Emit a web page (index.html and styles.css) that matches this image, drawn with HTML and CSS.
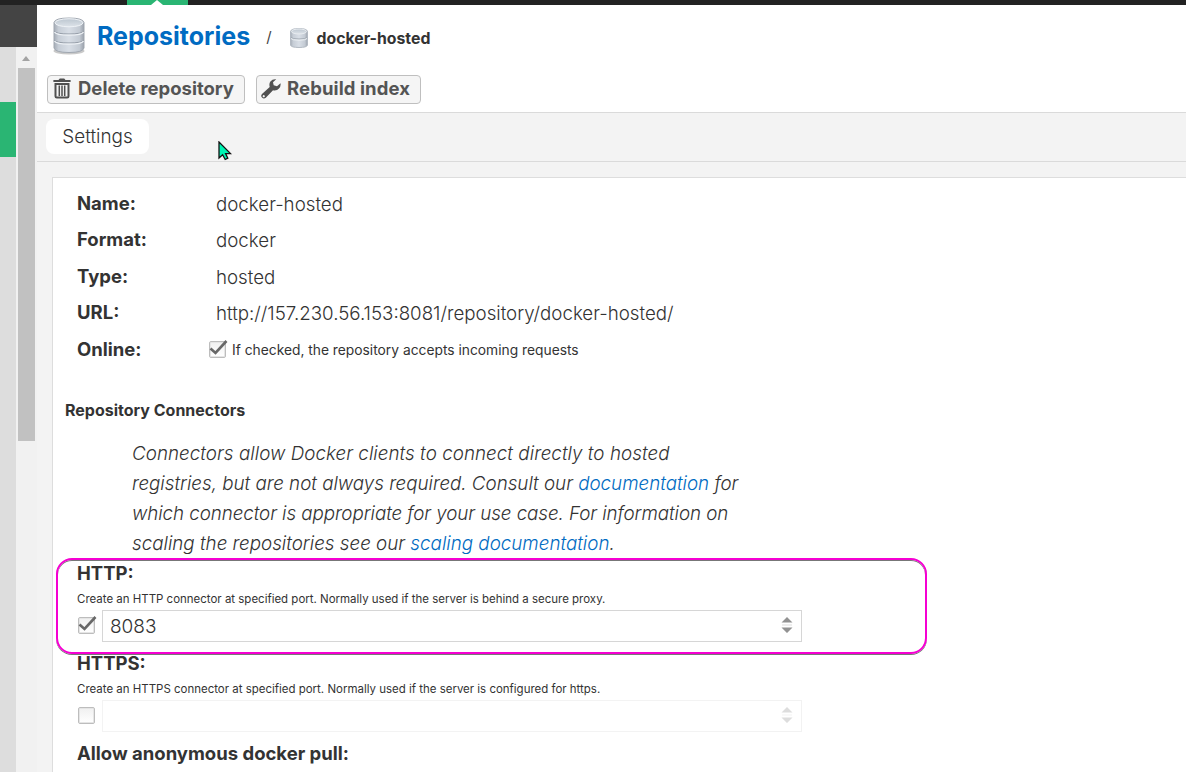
FILE: index.html
```html
<!DOCTYPE html>
<html lang="en">
<head>
<meta charset="utf-8">
<title>Repositories</title>
<link rel="stylesheet" href="styles.css">
</head>
<body>
<svg class="defs" width="0" height="0" aria-hidden="true">
  <defs>
    <linearGradient id="metal" x1="0" x2="1" y1="0" y2="0">
      <stop offset="0" stop-color="#a5acb6"/><stop offset=".15" stop-color="#c6cdd6"/>
      <stop offset=".5" stop-color="#d8dee6"/><stop offset=".85" stop-color="#c3cad3"/>
      <stop offset="1" stop-color="#9aa1ab"/>
    </linearGradient>
    <linearGradient id="lid" x1="0" x2="0" y1="0" y2="1">
      <stop offset="0" stop-color="#bcc6d0"/><stop offset="1" stop-color="#dde3e9"/>
    </linearGradient>
  </defs>
</svg>
<div class="topbar"><div class="topbar-tab"><span class="notch"></span></div></div>
<div class="shell">
  <aside class="side">
    <div class="side-head"></div>
    <div class="side-body">
      <div class="menu"><div class="menu-active"></div></div>
      <div class="scroll"><span class="scroll-up"></span><div class="thumb"></div></div>
    </div>
  </aside>
  <main class="main">
    <header class="header">
      <div class="crumbs">
        <svg class="db-large" width="34" height="38" viewBox="0 0 34 38">
          <ellipse cx="17" cy="34" rx="15.500" ry="3.500" fill="#c9c9c9"/>
          <path d="M2 5.500Q3 1 17 1T32 5.500V31Q31 35.500 17 35.500T2 31Z" fill="url(#metal)" stroke="#a0a7b0"/>
          <ellipse cx="17" cy="5.800" rx="14" ry="4" fill="url(#lid)" stroke="#eef2f6"/>
          <path d="M2 14Q4 17 17 17T32 14M2 23Q4 26 17 26T32 23" fill="none" stroke="#959da8"/>
          <path d="M2.500 15Q4 18.200 17 18.200T31.500 15M2.500 24Q4 27.200 17 27.200T31.500 24" fill="none" stroke="#edf1f5" stroke-width="1.300"/>
        </svg>
        <a class="crumb-root">Repositories</a>
        <span class="slash">/</span>
        <svg class="db-small" width="18" height="21" viewBox="0 0 18 21">
          <path d="M.500 3.500Q1 .500 9 .500T17.500 3.500V17Q17 19.500 9 19.500T.500 17Z" fill="url(#metal)" stroke="#b3bac3"/>
          <ellipse cx="9" cy="3.500" rx="7.500" ry="2.500" fill="url(#lid)" stroke="#e8ecf0"/>
          <path d="M1 9.500Q2 11 9 11T17 9.500" fill="none" stroke="#a2aab3"/>
          <path d="M1 10.500Q2 12.200 9 12.200T17 10.500" fill="none" stroke="#eef2f5"/>
        </svg>
        <span class="crumb-leaf">docker-hosted</span>
      </div>
      <div class="actions">
        <button class="btn btn-delete">
          <svg width="18" height="21" viewBox="0 0 18 21">
            <path d="M5.500 2 6.800.500H11.200L12.500 2H17.600V4H.400V2Z" fill="#505050"/>
            <path d="M2.500 6V18.200Q2.500 19.500 3.800 19.500H14.200Q15.500 19.500 15.500 18.200V6M1.500 6H16.500" fill="none" stroke="#505050" stroke-width="2"/>
            <path d="M6.300 7.500V18M9 7.500V18M11.700 7.500V18" stroke="#505050" stroke-width="1.500"/>
          </svg>
          <span>Delete repository</span>
        </button>
        <button class="btn btn-rebuild">
          <svg width="20" height="20" viewBox="0 0 20 20">
            <path fill="#505050" fill-rule="evenodd" d="M15.200.300Q11.600-.200 9.400 2.600 7.800 4.900 8.700 7.900L1 14.900Q-.600 16.700 1 18.600 2.800 20.400 4.800 18.800L12 11.200Q15.600 12 18 9.500 20.100 7.300 19.500 4.300L16 7.300 12.700 6.300 12 3.300ZM2.800 16.100A1.100 1.100 0 1 1 2.700 16.100Z"/>
          </svg>
          <span>Rebuild index</span>
        </button>
      </div>
    </header>
    <nav class="tabs"><a class="tab">Settings</a></nav>
    <section class="panel">
      <dl class="facts">
        <dt>Name:</dt><dd>docker-hosted</dd>
        <dt>Format:</dt><dd>docker</dd>
        <dt>Type:</dt><dd>hosted</dd>
        <dt>URL:</dt><dd>http://157.230.56.153:8081/repository/docker-hosted/</dd>
        <dt>Online:</dt>
        <dd class="online">
          <span class="check"><svg width="19" height="17" viewBox="0 0 19 17"><path d="M1.500 8.500 6.500 13 17.500 1" fill="none" stroke="#686868" stroke-width="2.600"/></svg></span>
          <span>If checked, the repository accepts incoming requests</span>
        </dd>
      </dl>
      <h2 class="section-title">Repository Connectors</h2>
      <p class="intro">
        <span class="l1">Connectors allow Docker clients to connect directly to hosted</span><br>
        <span class="l2">registries, but are not always required. Consult our <a>documentation</a> for</span><br>
        <span class="l3">which connector is appropriate for your use case. For information on</span><br>
        <span class="l4">scaling the repositories see our <a>scaling documentation</a>.</span>
      </p>
      <div class="connector">
        <div class="highlight"></div>
        <h3>HTTP:</h3>
        <p class="hint">Create an HTTP connector at specified port. Normally used if the server is behind a secure proxy.</p>
        <div class="field">
          <span class="check"><svg width="19" height="17" viewBox="0 0 19 17"><path d="M1.500 8.500 6.500 13 17.500 1" fill="none" stroke="#686868" stroke-width="2.600"/></svg></span>
          <div class="input"><span>8083</span>
            <svg width="12" height="16" viewBox="0 0 12 16"><path d="M.500 5.500 6 0 11.500 5.500ZM.500 10.500 6 16 11.500 10.500Z" fill="#929292"/><path d="M1 8H11" stroke="#ddd"/></svg>
          </div>
        </div>
      </div>
      <div class="connector">
        <h3>HTTPS:</h3>
        <p class="hint">Create an HTTPS connector at specified port. Normally used if the server is configured for https.</p>
        <div class="field">
          <span class="check"></span>
          <div class="input disabled"><span></span>
            <svg width="12" height="16" viewBox="0 0 12 16"><path d="M.500 5.500 6 0 11.500 5.500ZM.500 10.500 6 16 11.500 10.500Z" fill="#929292"/><path d="M1 8H11" stroke="#ddd"/></svg>
          </div>
        </div>
      </div>
      <div class="connector last"><h3>Allow anonymous docker pull:</h3></div>
    </section>
  </main>
</div>
<svg class="cursor" width="14" height="20" viewBox="0 0 14 20"><path d="M1 1V17L4.600 13.800 7.200 18.500 9.800 17.200 7.600 12.600H12.500Z" fill="#00f5b4" stroke="#111" stroke-width="1.300"/></svg>
</body>
</html>
```
FILE: styles.css
```css
* { box-sizing: border-box; margin: 0; padding: 0; }
body {
  height: 772px; overflow: hidden; display: flex; flex-direction: column;
  background: #fff; color: #333; font-family: Inter, "Liberation Sans", sans-serif;
}
.defs { position: absolute; }
.topbar { flex: none; height: 5px; padding-left: 127px; background: #222; }
.topbar-tab { display: flex; justify-content: center; width: 61px; height: 5px; background: #2ab573; }
.notch { width: 0; height: 0; margin-left: -1px; border: 6px solid transparent; border-top: 0; border-bottom: 5px solid #fff; }
.shell { flex: 1; min-height: 0; display: flex; }

.side { flex: none; width: 37px; display: flex; flex-direction: column; }
.side-head { height: 42px; background: #444; }
.side-body { flex: 1; display: flex; }
.menu { width: 16px; padding-top: 55px; background: #ddd; }
.menu-active { height: 55px; background: #2ab573; }
.scroll { flex: 1; display: flex; flex-direction: column; padding: 9px 2px 0; background: #f1f1f1; }
.scroll-up { margin-left: 4px; width: 0; height: 0; border: 4.5px solid transparent; border-top: 0; border-bottom: 5px solid #a3a3a3; }
.thumb { width: 17px; height: 373px; margin-top: 7px; background: #c1c1c1; }

.main { flex: 1; min-width: 0; display: flex; flex-direction: column; background: #f3f3f3; }
.header { flex: none; height: 108px; background: #fff; border-bottom: 1px solid #dadada; }
.crumbs { display: flex; height: 70px; padding-left: 15px; }
.db-large { margin-top: 12px; }
.crumb-root { margin-left: 11px; line-height: 62px; font-size: 25px; font-weight: 700; color: #006bc2; }
.slash { margin-left: 16px; line-height: 63px; font-size: 15px; color: #444; }
.db-small { margin: 23px 0 0 18px; }
.crumb-leaf { margin-left: 9px; line-height: 67px; font-size: 15.8px; font-weight: 650; }
.actions { display: flex; gap: 11px; padding-left: 10px; }
.btn {
  display: flex; align-items: center; height: 29px; border: 1px solid #bfbfbf; border-radius: 4px;
  background: #f5f5f5; color: #545454; font: 650 18.5px/26px Inter, "Liberation Sans", sans-serif; white-space: nowrap;
}
.btn span { height: 29px; }
.btn svg { margin-top: -2px; }
.btn-delete { width: 198px; padding-left: 5px; gap: 7px; }
.btn-rebuild { width: 165px; padding-left: 4px; gap: 6px; letter-spacing: .1px; }

.tabs { flex: none; height: 49px; padding: 6px 9px; border-bottom: 1px solid #dadada; }
.tab { display: block; width: 103px; height: 35px; border-radius: 8px; background: #fff; text-align: center; font-size: 18.9px; font-weight: 300; line-height: 35px; }

.panel { flex: 1; margin: 15px 0 0 15px; border: 1px solid #ddd; border-width: 1px 0 0 1px; background: #fff; padding: 7px 0 0 24px; }
.facts { display: grid; grid-template-columns: 139px 1fr; grid-template-rows: 36px 37px 36px 37px 37px; font-size: 18.5px; line-height: 36px; }
.facts dt { font-weight: 650; }
.facts dd { font-size: 18.73px; font-weight: 300; line-height: 40px; }
.facts .online { display: flex; align-items: center; gap: 6px; margin-left: -7px; font-size: 13.8px; font-weight: 400; line-height: 42px; }
.check {
  flex: none; display: block; width: 17px; height: 17px; border: 1px solid #bdbdbd; border-radius: 2px;
  background: linear-gradient(#f0f0f0, #fff); box-shadow: inset 0 0 0 1px #e5e5e5;
}
.check svg { display: block; margin: -2px 0 0 -1px; }
.section-title { margin: 30px 0 0 -12px; font-size: 16px; font-weight: 650; line-height: 24px; }
.intro { margin: 17px 0 -1px 55px; font-size: 18.8px; font-style: italic; font-weight: 300; line-height: 30px; white-space: nowrap; }
.intro a { color: #006bc2; }
.l1 { letter-spacing: .045px; }
.l2 { letter-spacing: -.015px; }
.l3 { letter-spacing: -.07px; }
.l4 { letter-spacing: 0; }

.connector { position: relative; height: 90px; }
.last { height: 30px; }
.connector h3 { font-size: 18.5px; font-weight: 650; line-height: 30px; }
.hint { height: 21px; font-size: 11.47px; line-height: 23px; }
.field { display: flex; align-items: center; gap: 7px; padding: 1px 0 0 1px; }
.field .check { margin-top: -2px; }
.input {
  display: flex; align-items: center; justify-content: space-between; width: 700px; height: 32px;
  padding: 0 8px 0 7px; border: 1px solid #d6d6d6; font-size: 19px; font-weight: 300;
}
.input svg { margin-top: -3px; }
.disabled { opacity: .3; }
.highlight {
  position: absolute; left: -21px; top: 0; width: 871px; height: 96px;
  border: 2px solid #f500d2; border-radius: 16px; box-shadow: 0 1px #777, inset 0 1px #777;
}
.cursor { position: absolute; left: 218px; top: 141px; }
```
